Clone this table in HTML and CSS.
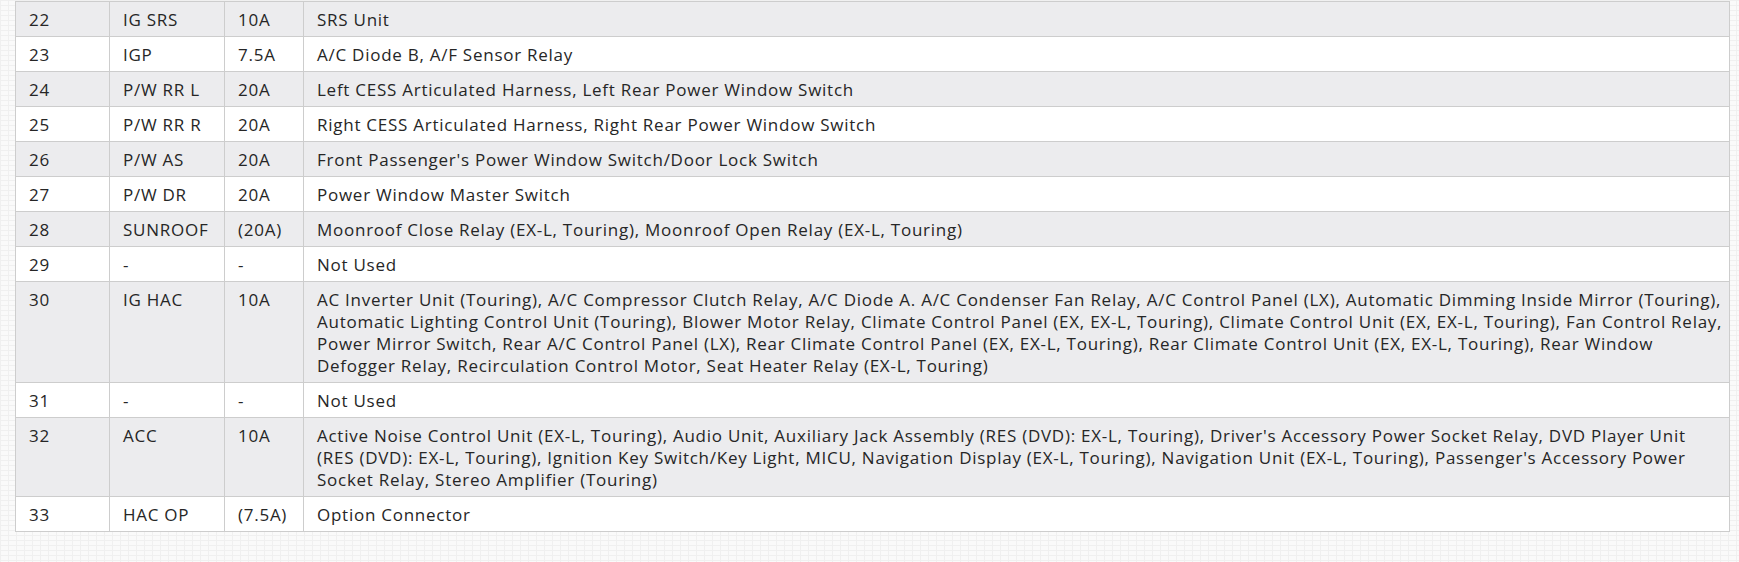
FILE: index.html
```html
<!DOCTYPE html>
<html lang="en">
<head>
<meta charset="utf-8">
<title>Fuse table</title>
<link rel="stylesheet" href="styles.css">
</head>
<body>
<div class="page">
  <table class="fuse-table">
    <colgroup>
      <col class="c-no">
      <col class="c-name">
      <col class="c-amp">
      <col class="c-desc">
    </colgroup>
    <tbody>
      <tr class="shade"><td>22</td><td>IG SRS</td><td>10A</td><td class="desc">SRS Unit</td></tr>
      <tr><td>23</td><td>IGP</td><td>7.5A</td><td class="desc">A/C Diode B, A/F Sensor Relay</td></tr>
      <tr class="shade"><td>24</td><td>P/W RR L</td><td>20A</td><td class="desc">Left CESS Articulated Harness, Left Rear Power Window Switch</td></tr>
      <tr><td>25</td><td>P/W RR R</td><td>20A</td><td class="desc">Right CESS Articulated Harness, Right Rear Power Window Switch</td></tr>
      <tr class="shade"><td>26</td><td>P/W AS</td><td>20A</td><td class="desc">Front Passenger's Power Window Switch/Door Lock Switch</td></tr>
      <tr><td>27</td><td>P/W DR</td><td>20A</td><td class="desc">Power Window Master Switch</td></tr>
      <tr class="shade"><td>28</td><td>SUNROOF</td><td>(20A)</td><td class="desc">Moonroof Close Relay (EX-L, Touring), Moonroof Open Relay (EX-L, Touring)</td></tr>
      <tr><td>29</td><td>-</td><td>-</td><td class="desc">Not Used</td></tr>
      <tr class="shade"><td>30</td><td>IG HAC</td><td>10A</td><td class="desc">AC Inverter Unit (Touring), A/C Compressor Clutch Relay, A/C Diode A. A/C Condenser Fan Relay, A/C Control Panel (LX), Automatic Dimming Inside Mirror (Touring), Automatic Lighting Control Unit (Touring), Blower Motor Relay, Climate Control Panel (EX, EX-L, Touring), Climate Control Unit (EX, EX-L, Touring), Fan Control Relay, Power Mirror Switch, Rear A/C Control Panel (LX), Rear Climate Control Panel (EX, EX-L, Touring), Rear Climate Control Unit (EX, EX-L, Touring), Rear Window Defogger Relay, Recirculation Control Motor, Seat Heater Relay (EX-L, Touring)</td></tr>
      <tr><td>31</td><td>-</td><td>-</td><td class="desc">Not Used</td></tr>
      <tr class="shade"><td>32</td><td>ACC</td><td>10A</td><td class="desc">Active Noise Control Unit (EX-L, Touring), Audio Unit, Auxiliary Jack Assembly (RES (DVD): EX-L, Touring), Driver's Accessory Power Socket Relay, DVD Player Unit (RES (DVD): EX-L, Touring), Ignition Key Switch/Key Light, MICU, Navigation Display (EX-L, Touring), Navigation Unit (EX-L, Touring), Passenger's Accessory Power Socket Relay, Stereo Amplifier (Touring)</td></tr>
      <tr><td>33</td><td>HAC OP</td><td>(7.5A)</td><td class="desc">Option Connector</td></tr>
    </tbody>
  </table>
</div>
</body>
</html>
```

FILE: styles.css
```css
html, body {
  margin: 0;
  padding: 0;
}
body {
  background-color: #efefef;
  background-image:
    linear-gradient(to right, #f0f0f0 1px, transparent 1px),
    linear-gradient(to bottom, #f0f0f0 1px, #fafafa 1px);
  background-size: 8px 5px, 8px 5px;
  font-family: "Open Sans", "Noto Sans", sans-serif;
  color: #262626;
}
.page {
  padding: 1px 0 0 15px;
}
.fuse-table {
  border-collapse: collapse;
  table-layout: fixed;
  width: 1715px;
  background: #ffffff;
  font-size: 17px;
  line-height: 22px;
  letter-spacing: 0.74px;
}
.c-no { width: 94px; }
.c-name { width: 115px; }
.c-amp { width: 79px; }
.fuse-table td {
  border: 1px solid #cdcdcd;
  padding: 7px 13px 5px 13px;
  vertical-align: top;
}
.fuse-table td.desc {
  padding-right: 4px;
}
.shade {
  background: #ececee;
}
```
